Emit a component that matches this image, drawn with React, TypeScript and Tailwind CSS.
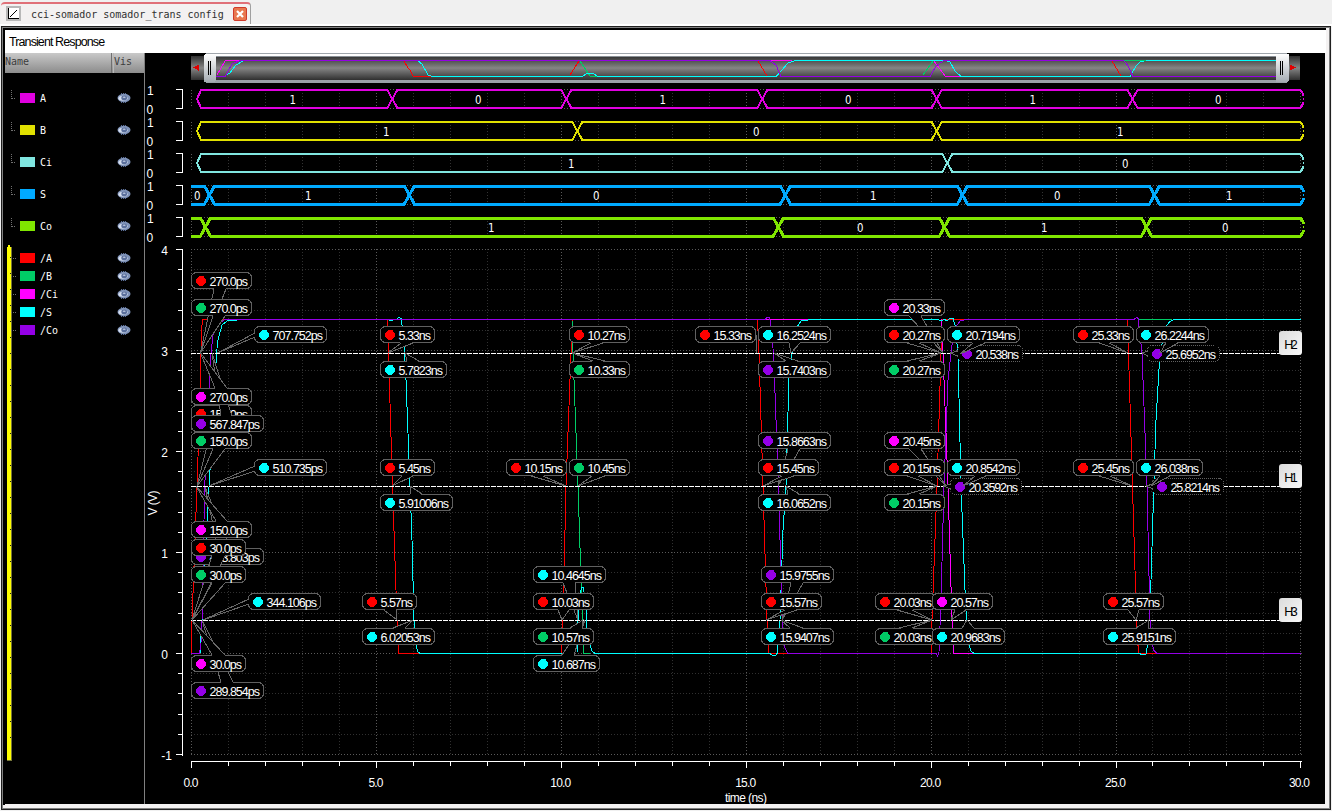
import React from "react";

const RED = "#ff0000";
const GREEN = "#00cc66";
const MAG = "#ff00ff";
const CYAN = "#00ffff";
const PURPLE = "#9400e6";

const SANS = "'Liberation Sans', Arial, sans-serif";

const buses = [
  { name: "A", color: "#e000e0", w: 2, start: 197, cross: [392.3, 566.3, 762.3, 936.7, 1132.5], vals: [[293, "1"], [478.5, "0"], [663, "1"], [848.5, "0"], [1033, "1"], [1218.5, "0"]] },
  { name: "B", color: "#e0e000", w: 2, start: 197, cross: [577.3, 936.7], vals: [[386.5, "1"], [756.5, "0"], [1120.5, "1"]] },
  { name: "Ci", color: "#80e6e0", w: 2, start: 197, cross: [947.3], vals: [[571.5, "1"], [1125.5, "0"]] },
  { name: "S", color: "#00aaff", w: 3, start: 0, cross: [209.5, 409.3, 785.3, 962.5, 1154.5], vals: [[197.5, "0"], [308.5, "1"], [596.5, "0"], [873.5, "1"], [1057.5, "0"], [1229.5, "1"]] },
  { name: "Co", color: "#80e600", w: 3, start: 0, cross: [205.5, 778.3, 944.5, 1146.5], vals: [[491.5, "1"], [860.5, "0"], [1044.5, "1"], [1225.5, "0"]] },
] as { name: string; color: string; w: number; start: number; cross: number[]; vals: [number, string][] }[];

const signals = [
  { name: "/A", color: RED },
  { name: "/B", color: GREEN },
  { name: "/Ci", color: MAG },
  { name: "/S", color: CYAN },
  { name: "/Co", color: PURPLE },
];

/* left edge, centre y, width, colour, text, pointer base a, pointer base b, pointer tip, dotted outline */
type Callout = [number, number, number, string, string, [number, number], [number, number], [number, number], boolean?];

const callouts: Callout[] = [
  [191.5, 280.5, 60, RED, "270.0ps", [214, 289], [226, 289], [200.5, 353]],
  [191.5, 307.5, 60, GREEN, "270.0ps", [213, 316], [225, 316], [200.5, 353]],
  [254.5, 334.5, 72, CYAN, "707.752ps", [255, 333], [255, 337], [217.5, 353]],
  [191.5, 413.5, 60, RED, "150.0ps", [213, 422], [225, 422], [197, 486]],
  [191.5, 423.5, 72, PURPLE, "567.847ps", [221, 416], [232, 416], [212, 353]],
  [191.5, 396.5, 60, MAG, "270.0ps", [215, 388], [227, 388], [200.5, 353]],
  [191.5, 440.5, 60, GREEN, "150.0ps", [213, 449], [225, 449], [197, 486]],
  [254.5, 467.5, 72, CYAN, "510.735ps", [255, 466], [255, 471], [209, 486]],
  [191.5, 556.5, 72, PURPLE, "423.803ps", [218, 548], [230, 548], [205, 487]],
  [191.5, 529.5, 60, MAG, "150.0ps", [216, 521], [227, 521], [196, 486]],
  [191.5, 547.5, 54, RED, "30.0ps", [212, 556], [225, 556], [192, 620]],
  [191.5, 574.5, 54, GREEN, "30.0ps", [212, 583], [225, 583], [192, 620]],
  [248.5, 601.5, 72, CYAN, "344.106ps", [249, 599], [249, 604], [203, 620]],
  [191.5, 690.5, 72, PURPLE, "289.854ps", [221, 682], [233, 682], [202, 620]],
  [191.5, 663.5, 54, MAG, "30.0ps", [212, 655], [225, 655], [192, 620]],

  [380.5, 334.5, 54, RED, "5.33ns", [401, 343], [413, 343], [388, 353]],
  [380.5, 369.5, 66, CYAN, "5.7823ns", [407, 361], [419, 361], [405, 353]],
  [380.5, 467.5, 54, RED, "5.45ns", [402, 476], [413, 476], [392, 486]],
  [380.5, 502.5, 72, CYAN, "5.91006ns", [410, 494], [422, 494], [410, 486]],
  [362.5, 601.5, 54, RED, "5.57ns", [384, 610], [396, 610], [397, 620]],
  [362.5, 636.5, 72, CYAN, "6.02053ns", [393, 628], [405, 628], [413, 620]],

  [569.5, 334.5, 60, RED, "10.27ns", [591, 343], [603, 343], [572, 353]],
  [569.5, 369.5, 60, GREEN, "10.33ns", [593, 361], [605, 361], [572, 353]],
  [506.5, 467.5, 60, RED, "10.15ns", [531, 476], [543, 476], [566, 486]],
  [569.5, 467.5, 60, GREEN, "10.45ns", [592, 476], [605, 476], [578, 486]],
  [533.5, 574.5, 72, CYAN, "10.4645ns", [563, 583], [575, 583], [578, 620]],
  [533.5, 601.5, 60, RED, "10.03ns", [558, 610], [569, 610], [562, 620]],
  [533.5, 663.5, 66, CYAN, "10.687ns", [562, 655], [574, 655], [585, 620]],
  [533.5, 636.5, 60, GREEN, "10.57ns", [570, 628], [582, 628], [583, 620]],

  [695.5, 334.5, 60, RED, "15.33ns", [756, 335], [756, 341], [757, 353]],
  [758.5, 334.5, 72, CYAN, "16.2524ns", [789, 343], [800, 343], [791, 353]],
  [758.5, 369.5, 72, PURPLE, "15.7403ns", [786, 361], [798, 361], [774, 353]],
  [758.5, 440.5, 72, PURPLE, "15.8663ns", [788, 449], [800, 449], [778, 486]],
  [758.5, 467.5, 60, RED, "15.45ns", [782, 476], [794, 476], [763, 486]],
  [758.5, 502.5, 72, CYAN, "16.0652ns", [788, 494], [799, 494], [786, 486]],
  [761.5, 574.5, 72, PURPLE, "15.9755ns", [791, 583], [803, 583], [782, 620]],
  [761.5, 601.5, 60, RED, "15.57ns", [785, 610], [797, 610], [766, 620]],
  [761.5, 636.5, 72, CYAN, "15.9407ns", [790, 628], [803, 628], [781, 620]],

  [884.5, 307.5, 60, MAG, "20.33ns", [909, 316], [921, 316], [943, 353]],
  [884.5, 334.5, 60, RED, "20.27ns", [907, 343], [919, 343], [941, 353]],
  [884.5, 369.5, 60, GREEN, "20.27ns", [907, 361], [919, 361], [941, 353]],
  [957.5, 353.5, 65, PURPLE, "20.538ns", [958, 351], [958, 356], [950, 353], true],
  [947.5, 334.5, 72, CYAN, "20.7194ns", [973, 343], [985, 343], [960, 354]],
  [884.5, 440.5, 60, MAG, "20.45ns", [909, 449], [921, 449], [946, 486]],
  [884.5, 467.5, 60, RED, "20.15ns", [907, 476], [918, 476], [937, 486]],
  [884.5, 502.5, 60, GREEN, "20.15ns", [907, 494], [919, 494], [937, 486]],
  [950.5, 486.5, 71, PURPLE, "20.3592ns", [951, 484], [951, 489], [943, 486], true],
  [947.5, 467.5, 72, CYAN, "20.8542ns", [975, 476], [986, 476], [963, 486]],
  [875.5, 601.5, 60, RED, "20.03ns", [897, 610], [912, 610], [932, 620]],
  [875.5, 636.5, 60, GREEN, "20.03ns", [899, 628], [912, 628], [932, 620]],
  [932.5, 601.5, 60, MAG, "20.57ns", [955, 610], [966, 610], [951, 620]],
  [932.5, 636.5, 72, CYAN, "20.9683ns", [962, 628], [974, 628], [967, 620]],

  [1073.5, 334.5, 60, RED, "25.33ns", [1099, 343], [1109, 343], [1128, 353]],
  [1147.5, 353.5, 72, PURPLE, "25.6952ns", [1148, 351], [1148, 356], [1142, 353], true],
  [1136.5, 334.5, 72, CYAN, "26.2244ns", [1166, 343], [1178, 343], [1160, 353]],
  [1073.5, 467.5, 60, RED, "25.45ns", [1099, 476], [1110, 476], [1132, 486]],
  [1152.5, 486.5, 71, PURPLE, "25.8214ns", [1153, 484], [1153, 489], [1146, 486], true],
  [1136.5, 467.5, 66, CYAN, "26.038ns", [1160, 476], [1170, 476], [1151, 486]],
  [1103.5, 601.5, 60, RED, "25.57ns", [1128, 610], [1139, 610], [1136, 620]],
  [1103.5, 636.5, 72, CYAN, "25.9151ns", [1136, 628], [1148, 628], [1149, 620]],
];

const traces: [string, string][] = [
  [RED, "191.5,653 192,620 197,486 200,400 201,353 202,325 203,319.5 230,319.5"],
  [RED, "387.5,319.5 388.5,353 392.5,486 397,620 398.5,653.5 420,653.5"],
  [RED, "561.5,653 563,620 566,486 571,353 572.5,319.5"],
  [RED, "757.5,319.5 759,353 763,486 767,620 769,653.5 787,653.5"],
  [RED, "931.5,653 932,620 937,486 941,353 942,319.5 972,319.5"],
  [RED, "1127.5,319.5 1128.5,353 1132.5,486 1136.5,620 1138.5,653.5 1157,653.5"],
  [GREEN, "572,320 573,353 578,486 583,640 583.5,653.5 590,653.5"],
  [MAG, "757,319.5 811,319.5"],
  [MAG, "941.5,319.5 943,353 948,486 952,620 953.5,653.5 973,653.5"],
  [CYAN, "200,653.5 202,620 208,505 210,470 215,385 216.5,353 218,340 222,325 228,320.5 237,320.5"],
  [CYAN, "389,320.5 393,320.5"],
  [CYAN, "397,318.5 399,317.5 401,318.5 402,325 404,345 406,380 410,486 412,540 414,620 416,645 418,652 420,653.5 562,653.5"],
  [CYAN, "577,653 578,620 581,590 582,587 583.5,588 586,610 587,635 590,645 592,651 595,653.5 770,653.5 772,655 776,655 777.5,653 778,640 780,620 783,530 786,486 789,375 792,353 797,327 801,321 811,319.5 938,319.5 941,321 944,319.5 947,320.5 950,318.5 953,318.5 955,325 958,353 961,486 965,590 966.5,620 969,645 971,651 974,653.5 1140,653.5 1140,654.5 1146,654.5 1147.5,645 1149,620 1151,580 1154,480 1156,420 1160,353 1164,335 1167,325 1170,321.5 1173,320 1179,319.5 1301,319.5"],
  [PURPLE, "191,653.5 199.5,653.5 201,643 202,620 204,520 205,480 209,395 211,353 213,335 217,325 224,320 230,319.5 765,319.5 767,317.5 769,317.5 770,320 771,330 773.5,353 778.5,486 782,610 783.5,640 785,648 788,653.5 936,653.5 937.5,656 939,652 941,600 944,486 948,380 952,345 955,328 960,321 966,319.5 1134,319.5 1137,317 1138.5,319 1139,327 1142,353 1147,486 1150,620 1152,640 1153.5,650 1157,653.5 1301,653.5"],
  [CYAN, "811,319.5 938,319.5"],
  [GREEN, "1139,319.5 1172,319.5"],
];

const mini: [string, string][] = [
  [RED, "404,61 408,68 410,70 413,76 432,76"],
  [RED, "570,75 579,61"],
  [GREEN, "580,61 590,76 598,76"],
  [RED, "758,61 767,76"],
  [GREEN, "923,75 933,61"],
  [MAG, "217,75 225,61 240,60.5"],
  [MAG, "934,61 945,76 962,76"],
  [RED, "1112,61 1121,76"],
  [CYAN, "226,75 230,73 236,65 243,61"],
  [CYAN, "418,61 422,64 428,75 432,76.5 582,76.5 588,73 594,74 598,76.5 776,76.5 782,70 788,63 795,60.5 946,60.5 950,62 955,71 961,76.5 1130,76.5 1136,66 1140,62 1146,60.5 1276,60.5"],
  [PURPLE, "216,76.5 225,76.5 232,64 240,60.5 770,60.5 776,65 781,76.5 930,76.5 936,66 944,60.5 1124,60.5 1128,66 1133,76.5 1276,76.5"],
  [MAG, "771,60.5 792,60.5"],
  [GREEN, "1124,60.5 1146,60.5"],
];

const steps = (n: number) => Array.from({ length: n }, (_, i) => i);
const gridX = (i: number) => Math.round(191 + i * 36.98) + 0.5;
const gridY = (i: number) => Math.round(249 + i * 20.2) + 0.5;

function Bus({ bus, index }: { bus: (typeof buses)[number]; index: number }) {
  const t = 90 + index * 32;
  const b = t + 18;
  const m = t + 9;
  const edges = bus.cross;
  let top = "";
  let bottom = "";
  if (bus.start) {
    top = `M${bus.start} ${m}L${bus.start + 4} ${t}`;
    bottom = `M${bus.start} ${m}L${bus.start + 4} ${b}`;
  } else {
    top = `M191 ${t}`;
    bottom = `M191 ${b}`;
  }
  edges.forEach((x) => {
    top += `L${x - 5} ${t}L${x} ${m}L${x + 5} ${t}`;
    bottom += `L${x - 5} ${b}L${x} ${m}L${x + 5} ${b}`;
  });
  top += `L1300.5 ${t}L1303 ${t + 4}V${t + 6}`;
  bottom += `L1300.5 ${b}L1303 ${b - 4}V${b - 6}`;
  return (
    <g>
      {steps(31).map((i) => (
        <path key={i} d={`M${gridX(i)} ${t}V${b}`} stroke={i % 5 ? "#333" : "#5a5a5a"} strokeDasharray="1 2" />
      ))}
      {edges.map((x) => (
        <path key={x} d={`M${x - 5} ${t - 0.5}h10M${x - 5} ${b + 0.5}h10`} stroke="#5a5a5a" strokeDasharray="1 2" />
      ))}
      <path d={top + bottom} fill="none" stroke={bus.color} strokeWidth={bus.w} />
      <path d={`M1303.500 ${m - 1}v2`} fill="none" stroke={bus.color} />
      <path d={`M176 ${t - 0.5}H182.5V${b + 0.5}H176`} fill="none" stroke="#fff" />
      <g fontFamily={SANS} fontSize="12" fill="#fff">
        <text x="147" y={t + 5}>1</text>
        <text x="146.5" y={b + 5.5}>0</text>
      </g>
      <g fontFamily="'DejaVu Sans', sans-serif" fontSize="12" fill="#fff">
        {bus.vals.map(([x, v]) => (
          <text key={x} x={x - 3.5} y={m + 5} textLength="6.5" lengthAdjust="spacingAndGlyphs">{v}</text>
        ))}
      </g>
    </g>
  );
}

function Label({ c }: { c: Callout }) {
  const [l, y, w, color, text, a, b, tip, dotted] = c;
  const vertical = a[1] === b[1];
  const inward = vertical ? (a[1] > y ? -1 : 1) : 0;
  return (
    <g>
      <rect x={l} y={y - 8} width={w} height="16" rx="5" fill="#000" stroke="#606060" strokeDasharray={dotted ? "1 1" : undefined} />
      <path d={`M${a[0]} ${a[1] + inward}L${tip[0]} ${tip[1]}L${b[0]} ${b[1] + inward}Z`} fill="#000" />
      <path d={`M${a[0]} ${a[1]}L${tip[0]} ${tip[1]}L${b[0]} ${b[1]}`} fill="none" stroke="#686868" />
      <path d={`M${l + 9.5} ${y - 5}l2.5 1l2.5 3v3l-3 3h-4l-3-3v-3l2.5-3z`} fill={color} />
      <text x={l + 18} y={y + 5} textLength={w - 21.5} fontFamily={SANS} fontSize="12.5" fill="#fff">{text}</text>
    </g>
  );
}

function Plot() {
  return (
    <svg className="block shrink-0" width="1180" height="751" viewBox="145 53 1180 751" shapeRendering="crispEdges">
      <defs>
        <linearGradient id="track" x1="0" y1="0" x2="0" y2="1">
          <stop offset="0" stopColor="#303030" />
          <stop offset="0.5" stopColor="#858585" />
          <stop offset="1" stopColor="#303030" />
        </linearGradient>
        <linearGradient id="grip" x1="0" y1="0" x2="0" y2="1">
          <stop offset="0" stopColor="#ffffff" />
          <stop offset="1" stopColor="#a4abb2" />
        </linearGradient>
        <linearGradient id="badge" x1="0" y1="0" x2="1" y2="1">
          <stop offset="0" stopColor="#dcdcdc" />
          <stop offset="1" stopColor="#f8f8f8" />
        </linearGradient>
      </defs>

      <rect x="191" y="56" width="1109" height="24" fill="url(#track)" />
      <path d="M198.500 64.500v6l-5-3z" fill="#e00000" />
      <path d="M1290 64.500v6l6-3z" fill="#e00000" />
      <rect x="206" y="53" width="1081" height="1" fill="#a0a6ac" />
      <rect x="206" y="54" width="1081" height="2" fill="#fff" />
      <rect x="216" y="56" width="1060" height="1" fill="#8a9096" />
      <rect x="206" y="80" width="1081" height="3" fill="#9aa1a8" />
      <rect x="204" y="54" width="12" height="28" rx="2" fill="url(#grip)" />
      <rect x="1276" y="54" width="13" height="28" rx="2" fill="url(#grip)" />
      <path d="M208.500 61v14M210.500 61v14M1280.500 61v14M1282.500 61v14" stroke="#000" />
      {mini.map(([color, pts], i) => (
        <polyline key={i} points={pts} fill="none" stroke={color} />
      ))}

      {buses.map((bus, i) => (
        <Bus key={bus.name} bus={bus} index={i} />
      ))}

      {steps(31).map((i) => (
        <path key={i} d={`M${gridX(i)} 249V755`} stroke={i % 5 ? "#303030" : "#5a5a5a"} strokeDasharray="1 2" />
      ))}
      {steps(26).map((i) => (
        <path key={i} d={`M191 ${gridY(i)}H1302`} stroke={i % 5 ? "#303030" : "#5a5a5a"} strokeDasharray="1 2" />
      ))}

      <path d="M182.500 249V756" stroke="#fff" />
      {steps(26).map((i) => (
        <path key={i} d={`M${i % 5 ? 178 : 176} ${gridY(i)}H182`} stroke="#fff" />
      ))}
      <path d="M191 761.500H1302" stroke="#fff" />
      {steps(31).map((i) => (
        <path key={i} d={`M${gridX(i)} 761V${i % 5 ? 766 : 768}`} stroke="#fff" />
      ))}
      <g fontFamily={SANS} fontSize="12" fill="#fff" textAnchor="middle">
        {["4", "3", "2", "1", "0"].map((v, i) => (
          <text key={v} x="164.500" y={254.5 + i * 101}>{v}</text>
        ))}
        <text x="166.500" y="759.500">-1</text>
        {["0.0", "5.0", "10.0", "15.0", "20.0", "25.0", "30.0"].map((v, i) => (
          <text key={v} x={191 + i * 184.9 - (i === 6 ? 1 : 0)} y="787" textLength={v.length === 3 ? 15 : 21}>{v}</text>
        ))}
        <text x="746" y="802" textLength="42">time (ns)</text>
        <text transform="translate(157 503) rotate(-90)" textLength="25">V (V)</text>
      </g>

      {traces.map(([color, pts], i) => (
        <polyline key={i} points={pts} fill="none" stroke={color} />
      ))}

      {[353.5, 486.5, 620.5].map((y) => (
        <path key={y} d={`M191 ${y}H1290`} stroke="#fff" strokeDasharray="5 1" />
      ))}

      {callouts.map((c, i) => (
        <Label key={i} c={c} />
      ))}

      {[["H2", 331], ["H1", 464], ["H3", 598]].map(([t, y]) => (
        <g key={t}>
          <rect x="1279" y={y} width="23" height="24" rx="3" fill="url(#badge)" shapeRendering="auto" />
          <text x="1291" y={Number(y) + 18} textAnchor="middle" fontFamily={SANS} fontSize="12.500" textLength="13.500" fill="#000">{t}</text>
        </g>
      ))}
    </svg>
  );
}

function Eye() {
  return (
    <svg className="block shrink-0" width="14" height="10" viewBox="0 0 14 10">
      <path d="M4 0.500h6M4 9.500h6" stroke="#566a94" strokeDasharray="1 1" />
      <ellipse cx="7" cy="5" rx="6.500" ry="4.200" fill="#7e92b8" />
      <ellipse cx="6" cy="5.200" rx="4.600" ry="2.500" fill="#d4dded" />
      <ellipse cx="7.200" cy="4.900" rx="2.900" ry="2.400" fill="#5a6f9c" />
      <ellipse cx="7.200" cy="4.300" rx="1.500" ry="0.800" fill="#b9c6de" />
    </svg>
  );
}

const MONO = "font-['DejaVu_Sans_Mono',monospace] text-[10px]";

function Item({ name, color, branch }: { name: string; color: string; branch: boolean }) {
  return (
    <div className="flex h-full items-center">
      <svg className="block shrink-0" width="9" height="18" shapeRendering="crispEdges">
        <path d={branch ? "M0.500 1V10M1 9.500H5" : "M0 9.500H6"} stroke="#707070" strokeDasharray="1 1" fill="none" />
      </svg>
      <div className="h-[10px] w-[15px] shrink-0" style={{ backgroundColor: color }} />
      <div className={`w-[82px] pl-[5px] pt-[2px] leading-[12px] text-white ${MONO}`}>{name}</div>
      <Eye />
    </div>
  );
}

function Sidebar() {
  return (
    <div className="flex w-[140px] shrink-0 flex-col border-r border-[#808080] bg-black">
      <div className={`flex h-5 shrink-0 bg-gradient-to-b from-[#c9c9c9] to-[#8c8c8c] leading-[17px] text-[#3c3c3c] ${MONO}`}>
        <div className="w-[107px] border-r border-[#707070]">Name</div>
        <div className="ml-px flex-1 border-l border-[#b8b8b8]">Vis</div>
      </div>
      <div className="flex flex-col pl-[6px] pt-[9px]">
        {buses.map((b) => (
          <div key={b.name} className="h-8">
            <Item name={b.name} color={b.color} branch />
          </div>
        ))}
      </div>
      <div className="mt-[3px] flex pl-[2px]">
        <svg className="block shrink-0" width="5" height="516" shapeRendering="crispEdges">
          <path d="M0 2h1V0h2v2h1v513H0z" fill="#ffff00" />
          <path d="M4.500 2V515M0 515.500H5" stroke="#77773a" />
          {steps(31).map((i) => (
            <rect key={i} x="3" y={12 + i * 16} width="1" height="1" fill="#222200" />
          ))}
        </svg>
        <div className="flex flex-col pl-px pt-[4px]">
          {signals.map((s) => (
            <div key={s.name} className="-ml-[2px] h-[18px]">
              <Item name={s.name} color={s.color} branch={false} />
            </div>
          ))}
        </div>
      </div>
    </div>
  );
}

export default function App() {
  return (
    <div className="flex h-[811px] w-[1332px] flex-col overflow-hidden bg-[#f0f0f0]">
      <div className="flex h-[26px] shrink-0 items-end border-b-2 border-white pl-px">
        <div className="flex h-[22px] w-[250px] items-center rounded-t-[4px] border-r border-t-2 border-r-[#a0a0a0] border-t-[#e07078] bg-[#f3f1f1] pl-[5px]">
          <svg className="mt-[-1px] block shrink-0" width="15" height="15" shapeRendering="crispEdges">
            <rect width="15" height="15" fill="#b8b8b8" />
            <rect x="2" y="2" width="11" height="11" fill="#fff" />
            <path d="M2.500 2V13M2 12.500H13M4 11L11 4" stroke="#000" fill="none" />
          </svg>
          <div className={`w-[212px] whitespace-pre pl-[10px] pt-px text-[#303030] ${MONO}`}>cci-somador somador_trans config</div>
          <div className="mt-[-1px] flex h-[14px] w-[14px] shrink-0 items-center justify-center rounded-[2px] border border-[#d03a2a] bg-[#e8784f]">
            <svg width="8" height="8" viewBox="0 0 8 8">
              <path d="M1 1L7 7M7 1L1 7" stroke="#fff" strokeWidth="2.200" />
            </svg>
          </div>
        </div>
      </div>
      <div className="ml-px h-[784px] w-[1330px] border border-[#202020] bg-[#f4f2f2]">
        <div className="h-[782px] w-[1328px] border border-[#808080]">
          <div className="flex h-[777px] w-[1323px] flex-col border-l-2 border-t-2 border-black">
            <div className="h-[23px] w-[1321px] shrink-0 bg-white pl-1 font-['Liberation_Sans',sans-serif] text-[12.500px] leading-[25px] tracking-[-0.9px] text-black">
              Transient Response
            </div>
            <div className="flex h-[751px] w-[1320px] bg-black">
              <Sidebar />
              <Plot />
            </div>
          </div>
        </div>
      </div>
    </div>
  );
}
